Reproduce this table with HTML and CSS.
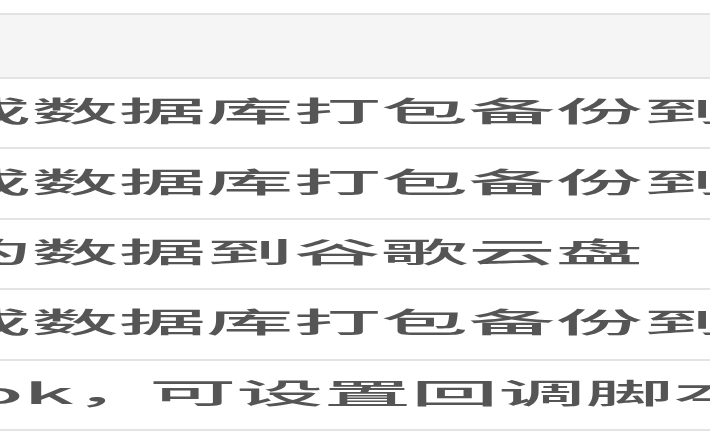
FILE: index.html
```html
<!DOCTYPE html>
<html lang="zh-CN">
<head>
<meta charset="utf-8">
<link rel="stylesheet" href="styles.css">
</head>
<body>
<div class="table">
  <div class="head"></div>
  <div class="row"><span class="txt first-cjk">或数据库打包备份到谷歌云盘</span></div>
  <div class="row"><span class="txt first-cjk">或数据库打包备份到谷歌云盘</span></div>
  <div class="row"><span class="txt first-cjk">的数据到谷歌云盘</span></div>
  <div class="row"><span class="txt first-cjk">或数据库打包备份到谷歌云盘</span></div>
  <div class="row"><span class="txt first-latin">ok<span class="punct">，</span>可设置回调脚本</span></div>
</div>
</body>
</html>
```
FILE: styles.css
```css
html, body {
  margin: 0;
  padding: 0;
  background: #ffffff;
}
.table {
  width: 710px;
  margin-top: 13px;
  overflow: hidden;
  border-top: 2px solid #e3e3e3;
}
.head {
  height: 62px;
  background: #f5f5f5;
  border-bottom: 2px solid #e3e3e3;
}
.row {
  display: flex;
  align-items: center;
  box-sizing: border-box;
  height: 70.4px;
  padding-bottom: 6px;
  border-bottom: 2px solid #e3e3e3;
  overflow: hidden;
  white-space: nowrap;
}
.txt {
  display: inline-block;
  flex: none;
  font-family: "Noto Sans CJK SC", "Noto Sans", sans-serif;
  font-size: 28px;
  font-weight: 500;
  line-height: 28px;
  color: #555555;
  transform: scaleX(3.12);
  transform-origin: left center;
}
.first-cjk {
  margin-left: -56px;
}
.first-latin {
  margin-left: -30px;
}
.punct {
  letter-spacing: -4px;
}
```
